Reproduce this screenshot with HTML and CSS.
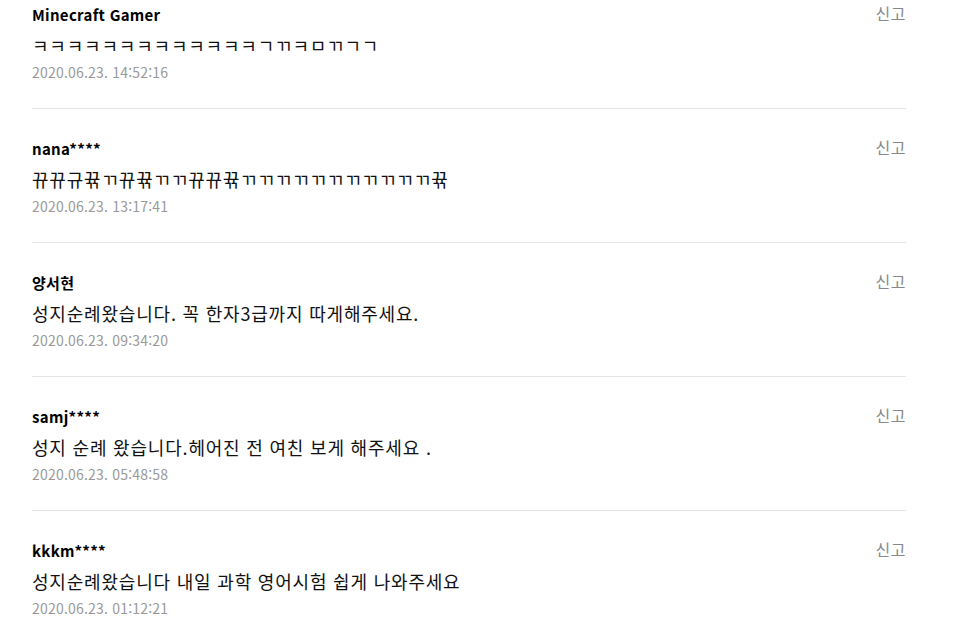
FILE: index.html
```html
<!DOCTYPE html>
<html lang="ko">
<head>
    <meta charset="UTF-8">
    <meta name="viewport" content="width=device-width, initial-scale=1">
    <title>댓글</title>
    <link rel="stylesheet" href="styles.css">
</head>
<body>

<section class="comments">
    <ul class="comment-list">
        <li class="comment">
            <div class="comment-head">
                <strong class="author">Minecraft Gamer</strong>
                <a href="#" class="report">신고</a>
            </div>
            <p class="text">ㅋㅋㅋㅋㅋㅋㅋㅋㅋㅋㅋㅋㅋㄱㄲㅋㅁㄲㄱㄱ</p>
            <span class="date">2020.06.23. 14:52:16</span>
        </li>
        <li class="comment">
            <div class="comment-head">
                <strong class="author">nana****</strong>
                <a href="#" class="report">신고</a>
            </div>
            <p class="text">뀨뀨규뀪ㄲ뀨뀪ㄲㄲ뀨뀨뀪ㄲㄲㄲㄲㄲㄲㄲㄲㄲㄲㄲ뀪</p>
            <span class="date">2020.06.23. 13:17:41</span>
        </li>
        <li class="comment">
            <div class="comment-head">
                <strong class="author">양서현</strong>
                <a href="#" class="report">신고</a>
            </div>
            <p class="text">성지순례왔습니다. 꼭 한자3급까지 따게해주세요.</p>
            <span class="date">2020.06.23. 09:34:20</span>
        </li>
        <li class="comment">
            <div class="comment-head">
                <strong class="author">samj****</strong>
                <a href="#" class="report">신고</a>
            </div>
            <p class="text">성지 순례 왔습니다.헤어진 전 여친 보게 해주세요 .</p>
            <span class="date">2020.06.23. 05:48:58</span>
        </li>
        <li class="comment">
            <div class="comment-head">
                <strong class="author">kkkm****</strong>
                <a href="#" class="report">신고</a>
            </div>
            <p class="text">성지순례왔습니다 내일 과학 영어시험 쉽게 나와주세요</p>
            <span class="date">2020.06.23. 01:12:21</span>
        </li>
    </ul>
</section>

</body>
</html>
```

FILE: styles.css
```css
* {
    box-sizing: border-box;
}

body {
    margin: 0;
    font-family: "Noto Sans CJK KR", "Noto Sans", sans-serif;
    -webkit-font-smoothing: antialiased;
    color: #111;
    background: #fff;
}

.comments {
    width: 874px;
    margin-left: 32px;
}

.comment-list {
    list-style: none;
    margin: 0;
    padding: 0;
}

.comment {
    padding: 29px 0 26px;
    border-bottom: 1px solid #e4e4e4;
}

.comment:first-child {
    padding-top: 4px;
}

.comment-head {
    display: flex;
    justify-content: space-between;
    align-items: flex-start;
    height: 22px;
}

.author {
    font-size: 15px;
    line-height: 22px;
    font-weight: 700;
    letter-spacing: 0.3px;
    color: #000;
}

.report {
    font-size: 16px;
    line-height: 18px;
    letter-spacing: 0.5px;
    color: #888;
    text-decoration: none;
}

.text {
    margin: 6px 0 0;
    font-size: 18px;
    line-height: 26px;
    letter-spacing: 0.8px;
    color: #111;
}

.date {
    display: block;
    margin-top: 4px;
    font-size: 14px;
    line-height: 20px;
    letter-spacing: 0.2px;
    color: #999;
}
```
